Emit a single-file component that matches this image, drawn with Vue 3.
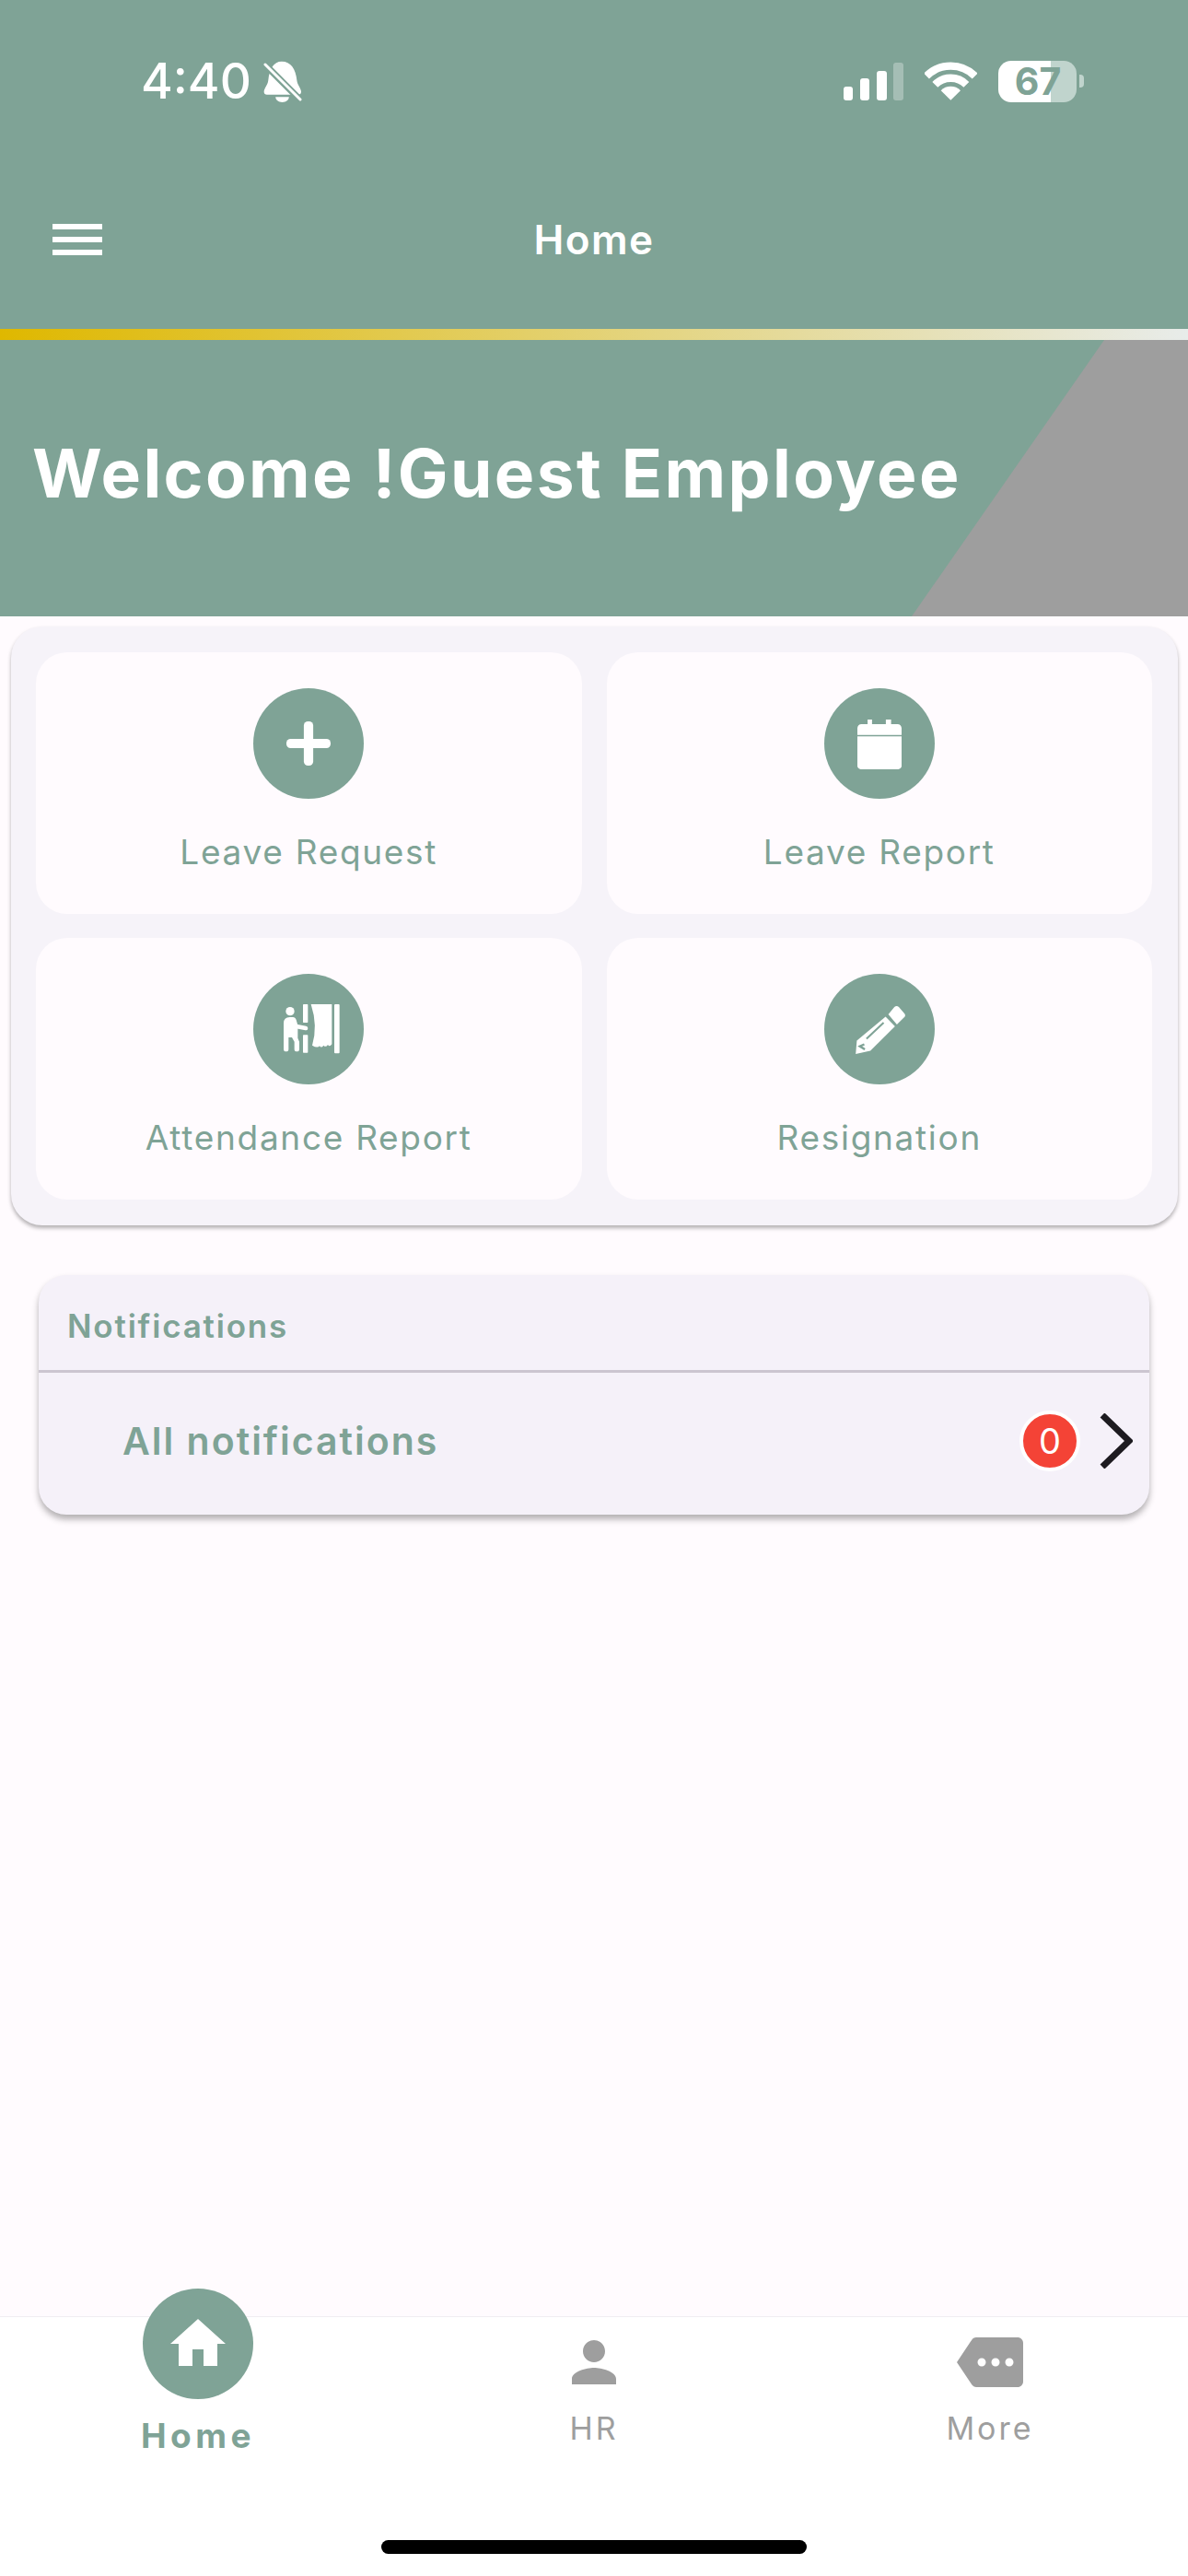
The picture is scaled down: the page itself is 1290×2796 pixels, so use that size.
<script setup>
const tiles = [
  { label: 'Leave Request', icon: 'plus' },
  { label: 'Leave Report', icon: 'calendar' },
  { label: 'Attendance Report', icon: 'attendance' },
  { label: 'Resignation', icon: 'pencil' }
];
</script>

<template>
  <div class="page">
    <header class="header">
      <div class="status">
        <div class="status-left">
          <span class="time">4:40</span>
          <svg class="bell" viewBox="495 72 130 140">
            <path fill="#fff" d="M558 76c30 0 46 24 50 62c2 16 14 26 14 38c0 6-4 9-10 9H510c-6 0-10-3-10-9c0-12 12-22 14-38c4-38 18-62 44-62z" />
            <path fill="#fff" d="M538 193h44c0 10-10 17-22 17s-22-7-22-17z" />
            <path stroke="#7fa396" stroke-width="22" d="M495 78l125 125" />
            <path stroke="#fff" stroke-width="9" stroke-linecap="round" d="M504 86l115 115" />
          </svg>
        </div>
        <div class="status-right">
          <svg class="signal" viewBox="0 0 65 41" fill="#fff">
            <rect x="0" y="26" width="10" height="15" rx="3" />
            <rect x="18" y="17" width="10" height="24" rx="3" />
            <rect x="36" y="9" width="11" height="32" rx="3" />
            <rect x="54" y="0" width="11" height="41" rx="3" opacity="0.3" />
          </svg>
          <svg class="wifi" viewBox="462 75 171 125" fill="none" stroke="#fff" stroke-width="25">
            <path d="M468 121A112 112 0 0 1 626 121" />
            <path d="M496 149A72 72 0 0 1 598 149" />
            <path stroke="none" fill="#fff" d="M547 200L515 168A45 45 0 0 1 579 168Z" />
          </svg>
          <div class="battery"><span>67</span></div>
          <div class="battery-tip"></div>
        </div>
      </div>
      <div class="toolbar">
        <div class="burger"><i></i><i></i><i></i></div>
        <div class="title">Home</div>
        <div></div>
      </div>
    </header>
    <div class="accent"></div>
    <section class="banner">
      <div class="wedge"></div>
      <h1>Welcome !Guest Employee</h1>
    </section>

    <main class="main">
      <div class="panel">
        <div v-for="t in tiles" :key="t.label" class="tile">
          <div class="tile-icon">
            <svg v-if="t.icon === 'plus'" viewBox="0 0 24 24" fill="#fff">
              <rect x="4" y="10.3" width="16" height="3.4" rx="1.5" />
              <rect x="10.3" y="4" width="3.4" height="16" rx="1.5" />
            </svg>
            <svg v-else-if="t.icon === 'calendar'" viewBox="0 0 24 24" fill="#fff">
              <path d="M7.7 3.3h1.6V5h5V3.3h1.9V5h2.3C19.4 5 20 5.7 20 6.500V8.900H4V6.500C4 5.700 4.600 5 5.500 5h2.200z" />
              <path d="M4 9.400h16v10.700c0 .7-.6 1.200-1.200 1.200H5.200C4.600 21.300 4 20.800 4 20.100z" />
            </svg>
            <svg v-else-if="t.icon === 'attendance'" viewBox="117 123 216 216" fill="#fff">
              <circle cx="165" cy="173" r="14" />
              <path d="M144 212q0-20 20-20h10q8 0 11 9l5 17v42l5 12v24q0 8-8 8t-8-8v-24l-8-14h-11v38q0 8-8 8t-8-8z" />
              <path d="M185 222l31 6" stroke="#fff" stroke-width="14" stroke-linecap="round" />
              <rect x="207" y="150" width="16" height="60" rx="2" />
              <rect x="207" y="250" width="16" height="58" rx="2" />
              <path d="M233 150h68v130q-7 10-13 2q-7 10-14 2q-7 10-13 2q-7 8-24-2Q256 220 233 150z" />
              <rect x="309" y="150" width="17" height="160" rx="3" />
            </svg>
            <svg v-else viewBox="0 0 24 24" fill="#fff">
              <path d="M15.200 6.700L17.400 4c.5-.5 1.100-.5 1.600 0l2 2.300c.4.400.4 1 0 1.400l-2.700 2.600z" />
              <path d="M14.200 7.500L17.600 11L8.700 19.800L3.400 21L3.800 16.200z" />
              <path d="M13.500 9.700L7.300 15.500" stroke="#7fa396" stroke-width="0.700" />
              <path d="M6.500 17.500L4.900 18.200L6.700 19.300" stroke="#7fa396" stroke-width="0.800" fill="none" />
            </svg>
          </div>
          <div class="tile-label">{{ t.label }}</div>
        </div>
      </div>

      <div class="notify">
        <div class="notify-head">Notifications</div>
        <div class="notify-row">
          <span class="notify-text">All notifications</span>
          <span class="badge">0</span>
          <svg class="chevron" viewBox="0 0 36 60" fill="none" stroke="#1d1b20" stroke-width="7">
            <path d="M3 2L32 30L3 58" />
          </svg>
        </div>
      </div>
    </main>

    <nav class="nav">
      <div class="nav-items">
        <div class="nav-item active">
          <div class="nav-bubble">
            <svg viewBox="0 0 24 24" fill="#fff"><path d="M10 20v-6h4v6h5v-8h3L12 3 2 12h3v8z" /></svg>
          </div>
          <span>Home</span>
        </div>
        <div class="nav-item">
          <svg viewBox="0 0 24 24" fill="#9e9e9e"><path d="M12 12c2.210 0 4-1.790 4-4s-1.790-4-4-4-4 1.790-4 4 1.790 4 4 4zm0 2c-2.670 0-8 1.340-8 4v2h16v-2c0-2.660-5.330-4-8-4z" /></svg>
          <span>HR</span>
        </div>
        <div class="nav-item">
          <svg viewBox="0 0 24 24" fill="#9e9e9e"><path d="M22 3H7c-.69 0-1.230.35-1.590.88L0 12l5.410 8.110c.36.53.97.89 1.660.89H22c1.100 0 2-.9 2-2V5c0-1.100-.9-2-2-2zM9 13.500c-.83 0-1.500-.67-1.500-1.500s.67-1.500 1.500-1.500 1.500.67 1.500 1.500-.67 1.500-1.500 1.500zm5 0c-.83 0-1.500-.67-1.500-1.500s.67-1.500 1.500-1.500 1.500.67 1.500 1.500-.67 1.500-1.500 1.500zm5 0c-.83 0-1.500-.67-1.500-1.500s.67-1.500 1.500-1.500 1.500.67 1.500 1.500-.67 1.500-1.500 1.500z" /></svg>
          <span>More</span>
        </div>
      </div>
      <div class="home-bar"></div>
    </nav>
  </div>
</template>

<style>
body {
  background: #fffbfe;
}
</style>

<style scoped>
.page {
  width: 1290px;
  height: 2796px;
  display: flex;
  flex-direction: column;
  background: #fffbfe;
  font-family: Inter, "Liberation Sans", sans-serif;
  overflow: hidden;
}

.header {
  height: 357px;
  background: #7fa396;
  color: #fff;
}

.status {
  height: 176px;
  display: flex;
  justify-content: space-between;
  align-items: center;
  padding: 0 113px 0 153px;
}

.status-left,
.status-right {
  display: flex;
  align-items: center;
}

.time {
  font-size: 53px;
  font-weight: 500;
  line-height: 60px;
}

.bell {
  width: 43px;
  height: 47px;
  margin-left: 12px;
}

.signal {
  width: 65px;
  height: 41px;
}

.wifi {
  width: 57px;
  height: 42px;
  margin-left: 23px;
}

.battery {
  width: 85px;
  height: 45px;
  margin-left: 23px;
  border-radius: 14px;
  display: flex;
  align-items: center;
  justify-content: center;
  background: linear-gradient(90deg, #fff 67%, #c0d4cd 67%);
  color: #7fa396;
  font-size: 41px;
  font-weight: 700;
  line-height: 45px;
}

.battery span {
  margin-left: 1px;
}

.battery-tip {
  width: 5px;
  height: 14px;
  margin-left: 3px;
  background: #c0d4cd;
  border-radius: 0 4px 4px 0;
}

.toolbar {
  height: 168px;
  display: grid;
  grid-template-columns: 1fr auto 1fr;
  align-items: center;
  padding-left: 57px;
  padding-right: 57px;
}

.burger {
  width: 54px;
  display: flex;
  flex-direction: column;
  gap: 8px;
}

.burger i {
  display: block;
  height: 6px;
  background: #fff;
}

.title {
  font-size: 44px;
  font-weight: 600;
  letter-spacing: 1.500px;
}

.accent {
  height: 12px;
  background: linear-gradient(90deg, #dfb800, #e8ecea);
}

.banner {
  position: relative;
  height: 300px;
  background: #7fa396;
  display: flex;
  align-items: center;
  padding-left: 35px;
}

.wedge {
  position: absolute;
  inset: 0;
  background: #9e9e9e;
  clip-path: polygon(1199px 0, 1290px 0, 1290px 300px, 990px 300px);
}

.banner h1 {
  position: relative;
  margin: 0 0 12px;
  color: #fff;
  font-size: 73px;
  font-weight: 700;
  letter-spacing: 2.400px;
}

.main {
  flex: 1;
}

.panel {
  margin: 11px 11px 0 12px;
  padding: 28px 28px 28px 27px;
  display: grid;
  grid-template-columns: 1fr 1fr;
  gap: 26px 27px;
  background: #f6f3f9;
  border-radius: 34px;
  box-shadow: 0 3px 4px rgba(0, 0, 0, 0.3);
}

.tile {
  height: 284px;
  padding-top: 39px;
  box-sizing: border-box;
  display: flex;
  flex-direction: column;
  align-items: center;
  background: #fffbfe;
  border-radius: 34px;
}

.tile-icon {
  width: 120px;
  height: 120px;
  display: flex;
  align-items: center;
  justify-content: center;
  border-radius: 50%;
  background: #7fa396;
}

.tile-icon svg {
  width: 72px;
  height: 72px;
}

.tile-label {
  margin-top: 36px;
  color: #7fa396;
  font-size: 37px;
  line-height: 44px;
  letter-spacing: 1.700px;
}

.notify {
  margin: 54px 42px 0;
  background: #f5f1f9;
  border-radius: 30px;
  box-shadow: 0 5px 7px rgba(0, 0, 0, 0.3);
}

.notify-head {
  height: 106px;
  box-sizing: border-box;
  padding: 6px 0 0 31px;
  display: flex;
  align-items: center;
  border-bottom: 3px solid #cbc5d0;
  color: #7fa396;
  font-size: 35px;
  font-weight: 600;
  letter-spacing: 1.800px;
}

.notify-row {
  height: 154px;
  box-sizing: border-box;
  padding: 0 18px 6px 91px;
  display: flex;
  align-items: center;
}

.notify-text {
  flex: 1;
  color: #7fa396;
  font-size: 41px;
  font-weight: 600;
  letter-spacing: 2px;
}

.badge {
  width: 58px;
  height: 58px;
  box-sizing: content-box;
  display: flex;
  align-items: center;
  justify-content: center;
  border: 4px solid #fff;
  border-radius: 50%;
  background: #f44336;
  color: #fff;
  font-size: 38px;
}

.chevron {
  width: 36px;
  height: 60px;
  margin-left: 21px;
}

.nav {
  height: 282px;
  box-sizing: border-box;
  display: flex;
  flex-direction: column;
  justify-content: space-between;
  background: #fff;
  border-top: 1px solid #f0edf2;
}

.nav-items {
  display: grid;
  grid-template-columns: repeat(3, 1fr);
}

.nav-item {
  padding-top: 13px;
  display: flex;
  flex-direction: column;
  align-items: center;
  color: #9e9e9e;
  font-size: 34px;
  line-height: 44px;
  letter-spacing: 3px;
}

.nav-item svg {
  width: 72px;
  height: 72px;
}

.nav-item span {
  margin-top: 14px;
}

.nav-item.active {
  margin-top: -31px;
  padding-top: 0;
  color: #7fa396;
  font-size: 37px;
  font-weight: 700;
  letter-spacing: 4.500px;
}

.nav-bubble {
  width: 120px;
  height: 120px;
  display: flex;
  align-items: center;
  justify-content: center;
  border-radius: 50%;
  background: #7fa396;
}

.nav-item.active span {
  margin-top: 18px;
}

.home-bar {
  width: 462px;
  height: 15px;
  margin: 0 auto 24px;
  border-radius: 8px;
  background: #000;
}
</style>
